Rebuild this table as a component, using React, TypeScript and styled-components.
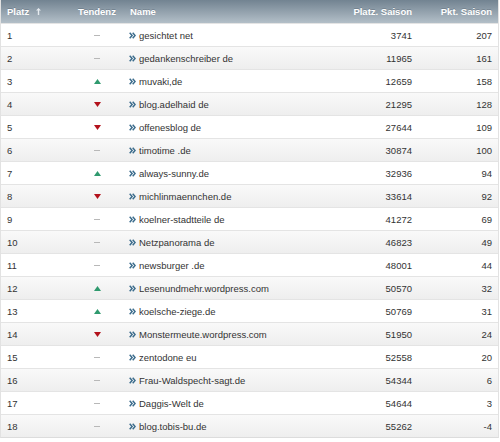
import React from "react";
import styled, { createGlobalStyle } from "styled-components";

const Global = createGlobalStyle`
  html, body { margin: 0; padding: 0; background: #ffffff; }
  body { font-family: "Liberation Sans", Arial, sans-serif; }
`;

type Trend = "up" | "down" | "none";
type Row = { rank: number; trend: Trend; name: string; place: number; pts: number };

const rows: Row[] = [
  { rank: 1, trend: "none", name: "gesichtet net", place: 3741, pts: 207 },
  { rank: 2, trend: "none", name: "gedankenschreiber de", place: 11965, pts: 161 },
  { rank: 3, trend: "up", name: "muvaki,de", place: 12659, pts: 158 },
  { rank: 4, trend: "down", name: "blog.adelhaid de", place: 21295, pts: 128 },
  { rank: 5, trend: "down", name: "offenesblog de", place: 27644, pts: 109 },
  { rank: 6, trend: "none", name: "timotime .de", place: 30874, pts: 100 },
  { rank: 7, trend: "up", name: "always-sunny.de", place: 32936, pts: 94 },
  { rank: 8, trend: "down", name: "michlinmaennchen.de", place: 33614, pts: 92 },
  { rank: 9, trend: "none", name: "koelner-stadtteile de", place: 41272, pts: 69 },
  { rank: 10, trend: "none", name: "Netzpanorama de", place: 46823, pts: 49 },
  { rank: 11, trend: "none", name: "newsburger .de", place: 48001, pts: 44 },
  { rank: 12, trend: "up", name: "Lesenundmehr.wordpress.com", place: 50570, pts: 32 },
  { rank: 13, trend: "up", name: "koelsche-ziege.de", place: 50769, pts: 31 },
  { rank: 14, trend: "down", name: "Monstermeute.wordpress.com", place: 51950, pts: 24 },
  { rank: 15, trend: "none", name: "zentodone eu", place: 52558, pts: 20 },
  { rank: 16, trend: "none", name: "Frau-Waldspecht-sagt.de", place: 54344, pts: 6 },
  { rank: 17, trend: "none", name: "Daggis-Welt de", place: 54644, pts: 3 },
  { rank: 18, trend: "none", name: "blog.tobis-bu.de", place: 55262, pts: -4 },
];

const Table = styled.div`
  width: 499px;
  border-left: 1px solid #e2e2e2;
  border-right: 1px solid #e2e2e2;
  border-bottom: 1px solid #dcdcdc;
  box-sizing: border-box;
`;

const cols = "69px 54px 1fr 100px 80px";

const HeadRow = styled.div`
  display: grid;
  grid-template-columns: ${cols};
  height: 23px;
  align-items: center;
  background: linear-gradient(#728391, #b3bfc8);
  color: #ffffff;
  font-weight: bold;
  font-size: 9.5px;
  text-shadow: 0 -1px 0 rgba(60, 75, 90, 0.3);
`;

const HeadCell = styled.div<{ $align?: "left" | "center" | "right" }>`
  padding: 0 6px;
  display: flex;
  align-items: center;
  justify-content: ${(p) =>
    p.$align === "center" ? "center" : p.$align === "right" ? "flex-end" : "flex-start"};
  gap: 7px;
`;

const BodyRow = styled.div<{ $alt: boolean }>`
  display: grid;
  grid-template-columns: ${cols};
  height: 23px;
  box-sizing: border-box;
  align-items: center;
  border-top: 1px solid #e4e4e4;
  background: ${(p) => (p.$alt ? "linear-gradient(#f9f9f9, #eeeeee)" : "#ffffff")};
  color: #333333;
  font-size: 9.5px;
  &:first-of-type { border-top: none; }
`;

const Cell = styled.div<{ $align?: "left" | "center" | "right" }>`
  padding: 0 6px;
  text-align: ${(p) => p.$align ?? "left"};
  white-space: nowrap;
  overflow: hidden;
`;

const TrendCell = styled.div`
  display: flex;
  justify-content: center;
  align-items: center;
`;

const NameCell = styled.div`
  display: flex;
  align-items: center;
  gap: 3px;
  padding-left: 5px;
  white-space: nowrap;
`;

const Dash = styled.span`
  display: block;
  width: 6px;
  height: 1px;
  background: #b8b8b8;
`;

const SortIcon = () => (
  <svg width="5" height="7" viewBox="0 0 5 7">
    <path d="M2.5 0 L5 2.5 L3.2 2.5 L3.2 7 L1.8 7 L1.8 2.5 L0 2.5 Z" fill="#e6ebef" />
  </svg>
);

const TrendIcon = ({ t }: { t: Trend }) => {
  if (t === "none") return <Dash />;
  if (t === "up")
    return (
      <svg width="7" height="5" viewBox="0 0 7 5">
        <path d="M3.5 0 L7 5 L0 5 Z" fill="#2f9a6e" />
      </svg>
    );
  return (
    <svg width="7" height="5" viewBox="0 0 7 5">
      <path d="M0 0 L7 0 L3.5 5 Z" fill="#b3121c" />
    </svg>
  );
};

const Chevrons = () => (
  <svg width="7" height="7" viewBox="0 0 7 7">
    <path d="M0.7 0.8 L3.1 3.5 L0.7 6.2" stroke="#3b6c8c" strokeWidth="1.5" fill="none" />
    <path d="M3.7 0.8 L6.1 3.5 L3.7 6.2" stroke="#3b6c8c" strokeWidth="1.5" fill="none" />
  </svg>
);

export default function App() {
  return (
    <>
      <Global />
      <Table>
        <HeadRow>
          <HeadCell>
            Platz <SortIcon />
          </HeadCell>
          <HeadCell $align="center">Tendenz</HeadCell>
          <HeadCell>Name</HeadCell>
          <HeadCell $align="right">Platz. Saison</HeadCell>
          <HeadCell $align="right">Pkt. Saison</HeadCell>
        </HeadRow>
        {rows.map((r, i) => (
          <BodyRow key={r.rank} $alt={i % 2 === 1}>
            <Cell>{r.rank}</Cell>
            <TrendCell>
              <TrendIcon t={r.trend} />
            </TrendCell>
            <NameCell>
              <Chevrons />
              {r.name}
            </NameCell>
            <Cell $align="right">{r.place}</Cell>
            <Cell $align="right">{r.pts}</Cell>
          </BodyRow>
        ))}
      </Table>
    </>
  );
}
